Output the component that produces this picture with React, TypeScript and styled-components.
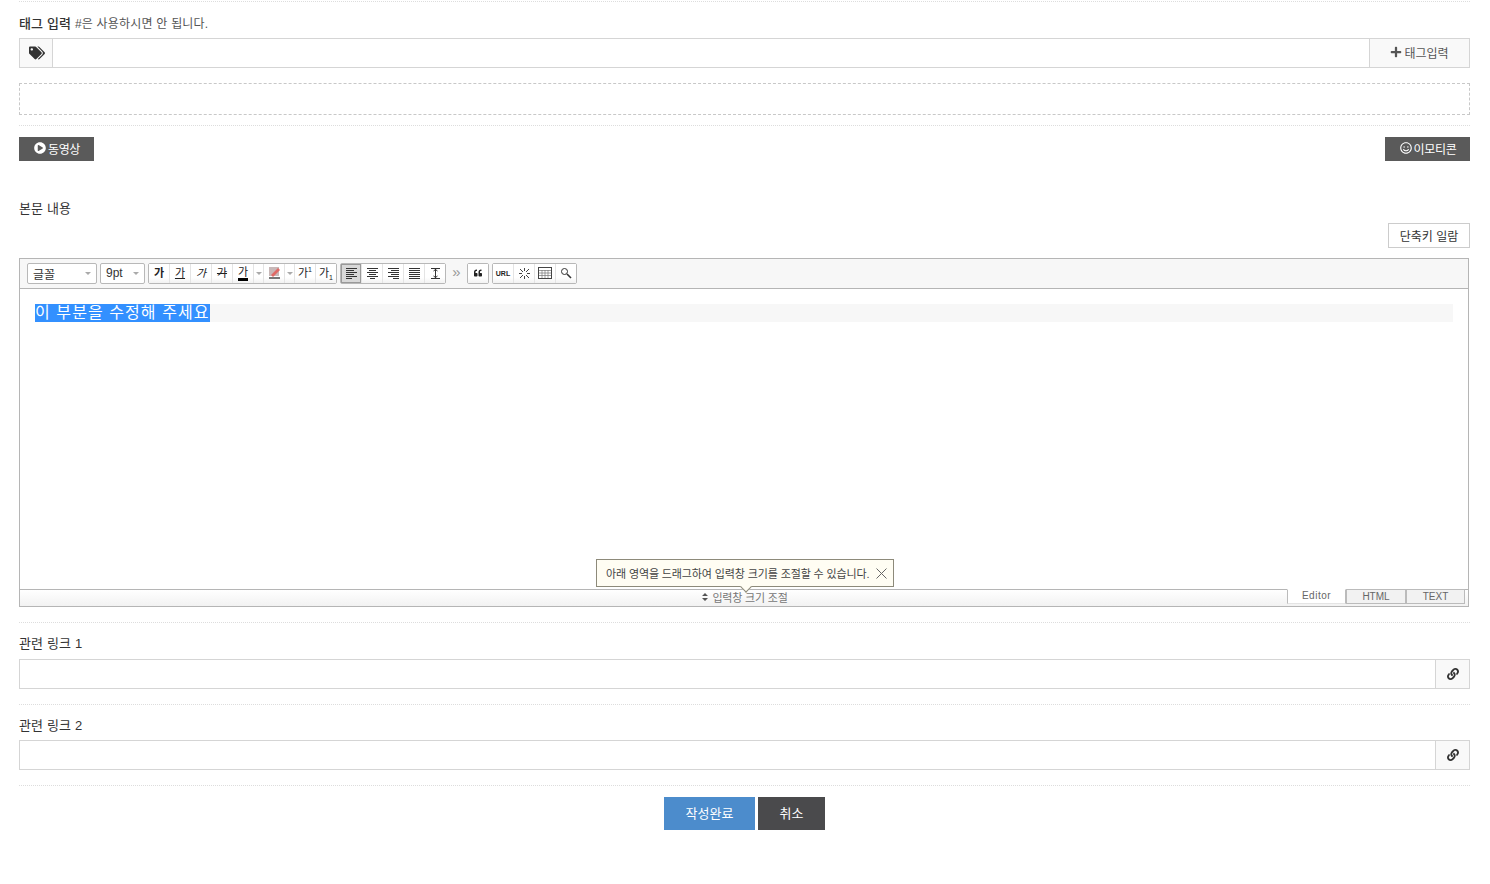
import React from 'react';
import styled, { createGlobalStyle } from 'styled-components';
import { FaTags, FaPlus, FaPlayCircle, FaRegSmile, FaLink, FaQuoteLeft } from 'react-icons/fa';

const FONT = `"Liberation Sans", "Noto Sans CJK KR", sans-serif`;

const GlobalStyle = createGlobalStyle`
	html, body {
		margin: 0;
		padding: 0;
		background: #fff;
		font-family: ${FONT};
		font-size: 12px;
		color: #333;
	}
	* {
		box-sizing: border-box;
	}
`;

const Page = styled.div`
	width: 1490px;
	height: 884px;
	padding: 1px 20px 0 19px;
	overflow: hidden;
`;

const Dotted = styled.div<{ $top?: number }>`
	height: 1px;
	border-top: 1px dotted #ddd;
	margin-top: ${(p) => p.$top ?? 0}px;
`;

const Label = styled.div<{ $top: number }>`
	margin-top: ${(p) => p.$top}px;
	height: 16px;
	line-height: 16px;
	font-size: 13px;
	color: #333;
	letter-spacing: 0.15px;

	& b {
		font-weight: 500;
	}

	& small {
		font-size: 12px;
		letter-spacing: 0.2px;
		color: #555;
	}
`;

const InputRow = styled.div<{ $top: number }>`
	display: flex;
	height: 30px;
	margin-top: ${(p) => p.$top}px;
	border: 1px solid #d5d5d5;
`;

const Addon = styled.div<{ $width: number; $side: 'left' | 'right' }>`
	flex: none;
	width: ${(p) => p.$width}px;
	display: flex;
	align-items: center;
	justify-content: center;
	background: #f9f9f9;
	color: #555;
	font-size: 12px;
	border-${(p) => (p.$side === 'left' ? 'right' : 'left')}: 1px solid #d5d5d5;
`;

const TagAddon = styled(Addon)`
	padding-bottom: 2px;
	gap: 2px;
`;

const TagIconAddon = styled(Addon)`
	padding-left: 1px;
`;

const Field = styled.div`
	flex: 1;
	background: #fff;
`;

const TagList = styled.div`
	height: 32px;
	margin-top: 15px;
	border: 1px dashed #c8c8c8;
`;

const MediaRow = styled.div`
	display: flex;
	justify-content: space-between;
	margin-top: 11px;
`;

const MediaButton = styled.div<{ $width: number }>`
	width: ${(p) => p.$width}px;
	height: 24px;
	display: flex;
	align-items: center;
	justify-content: center;
	gap: 2px;
	padding: 0 0 2px 1px;
	background: #5a5a5a;
	color: #fff;
	font-size: 12px;
	letter-spacing: -0.35px;
`;

const ShortcutRow = styled.div`
	display: flex;
	justify-content: flex-end;
	margin-top: 6px;
`;

const ShortcutButton = styled.div`
	width: 82px;
	height: 25px;
	display: flex;
	align-items: center;
	justify-content: center;
	border: 1px solid #ccc;
	background: #fff;
	font-size: 12px;
	color: #333;
`;

const Editor = styled.div`
	position: relative;
	width: 1450px;
	height: 349px;
	margin-top: 10px;
	border: 1px solid #b5b5b5;
	display: flex;
	flex-direction: column;
`;

const Toolbar = styled.div`
	height: 30px;
	flex: none;
	display: flex;
	align-items: center;
	gap: 3px;
	padding: 0 0 1px 7px;
	background: #f7f7f7;
	border-bottom: 1px solid #b5b5b5;
`;

const Combo = styled.div<{ $width: number }>`
	width: ${(p) => p.$width}px;
	height: 21px;
	display: flex;
	align-items: center;
	justify-content: space-between;
	padding: 0 5px;
	background: #fff;
	border: 1px solid #b8b8b8;
	border-radius: 2px;
	font-size: 12px;
	color: #333;
`;

const Caret = styled.i`
	display: block;
	width: 0;
	height: 0;
	border-left: 3px solid transparent;
	border-right: 3px solid transparent;
	border-top: 3px solid #aaa;
`;

const Group = styled.div`
	display: flex;
	height: 21px;
	background: #fff;
	border: 1px solid #b8b8b8;
	border-radius: 2px;

	& > :first-child {
		width: 20px;
	}
`;

const Tool = styled.div<{ $active?: boolean; $narrow?: boolean }>`
	width: ${(p) => (p.$narrow ? 10 : 21)}px;
	height: 19px;
	display: flex;
	align-items: center;
	justify-content: center;
	font-size: 11px;
	line-height: 1;
	color: #222;
	background: ${(p) => (p.$active ? '#d8d8d8' : 'linear-gradient(#fff 70%, #f2f2f2)')};
	box-shadow: ${(p) => (p.$active ? 'inset 0 0 0 1px #999' : 'none')};

	& + & {
		border-left: 1px solid #e4e4e4;
	}
`;

const More = styled.div`
	width: 15px;
	padding-bottom: 3px;
	text-align: center;
	font-size: 15px;
	line-height: 16px;
	color: #999;
`;

const Glyph = styled.span<{ $bold?: boolean; $line?: 'under' | 'strike'; $italic?: boolean }>`
	font-weight: ${(p) => (p.$bold ? 700 : 400)};
	font-style: ${(p) => (p.$italic ? 'italic' : 'normal')};
	text-decoration: ${(p) => (p.$line === 'strike' ? 'line-through' : p.$line ? 'underline' : 'none')};

	& sup,
	& sub {
		font-size: 7px;
		line-height: 0;
	}
`;

const ColorGlyph = styled.span`
	display: block;
	height: 15px;
	line-height: 12px;
	border-bottom: 3px solid #000;
`;

const TinyGlyph = styled.span`
	font-size: 7px;
	font-weight: 700;
`;

const Body = styled.div`
	flex: 1;
	padding: 15px 15px 0;
	background: #fff;
`;

const BodyLine = styled.div`
	height: 18px;
	line-height: 18px;
	background: #f7f7f7;
	font-size: 16px;
	color: #fff;
`;

const Selected = styled.span`
	display: inline-block;
	height: 18px;
	letter-spacing: 1.08px;
	background: #3390ff;
`;

const ResizeBar = styled.div`
	position: relative;
	flex: none;
	height: 17px;
	display: flex;
	align-items: center;
	justify-content: center;
	gap: 4px;
	padding: 0 0 2px 2px;
	background: linear-gradient(#fff, #f2f2f2);
	border-top: 1px solid #b5b5b5;
	color: #777;
	font-size: 11px;
	letter-spacing: -0.2px;
`;

const Tabs = styled.div`
	position: absolute;
	right: 3px;
	top: -1px;
	display: flex;
	height: 15px;
`;

const Tab = styled.div<{ $active?: boolean; $width: number }>`
	width: ${(p) => p.$width}px;
	height: 15px;
	display: flex;
	align-items: center;
	justify-content: center;
	padding-bottom: ${(p) => (p.$active ? 3 : 0)}px;
	font-size: 10px;
	color: #666;
	background: ${(p) => (p.$active ? '#fff' : '#f2f2f2')};
	border: 1px solid #bbb;
	border-top-color: ${(p) => (p.$active ? '#fff' : '#bbb')};
	border-bottom-color: ${(p) => (p.$active ? '#e4e4e4' : '#bbb')};
	letter-spacing: ${(p) => (p.$active ? '0.5px' : '0')};
`;

const Hint = styled.div`
	position: absolute;
	left: 576px;
	top: 300px;
	width: 298px;
	height: 28px;
	display: flex;
	align-items: center;
	justify-content: space-between;
	padding: 0 6px 0 9px;
	background: #fffdf3;
	border: 1px solid #8d8a7a;
	font-size: 11px;
	letter-spacing: -0.12px;
	color: #444;
	white-space: nowrap;

	&::after {
		content: '';
		position: absolute;
		left: 145px;
		bottom: -5px;
		width: 7px;
		height: 7px;
		background: #fffdf3;
		border-right: 1px solid #8d8a7a;
		border-bottom: 1px solid #8d8a7a;
		transform: rotate(45deg);
	}
`;

const Actions = styled.div`
	display: flex;
	justify-content: center;
	gap: 3px;
	margin-top: 11px;
`;

const ActionButton = styled.div<{ $primary?: boolean; $width: number }>`
	width: ${(p) => p.$width}px;
	height: 33px;
	display: flex;
	align-items: center;
	justify-content: center;
	padding-bottom: 2px;
	background: ${(p) => (p.$primary ? '#4c8ccc' : '#4a4a4c')};
	color: #fff;
	font-size: 13px;
`;

const AlignIcon = ({ rows }: { rows: [number, number][] }) => (
	<svg width="13" height="13" viewBox="0 0 13 13">
		{rows.map(([x, w], i) => (
			<rect key={i} x={x} y={1 + i * 2} width={w} height="1" fill="#333" />
		))}
	</svg>
);

const App = () => (
	<>
		<GlobalStyle />
		<Page>
			<Dotted />
			<Label $top={14}>
				<b>태그 입력</b> <small>#은 사용하시면 안 됩니다.</small>
			</Label>
			<InputRow $top={6}>
				<TagIconAddon $width={33} $side="left">
					<FaTags size={16} color="#333" />
				</TagIconAddon>
				<Field />
				<TagAddon $width={100} $side="right">
					<FaPlus size={12} />
					태그입력
				</TagAddon>
			</InputRow>
			<TagList />
			<Dotted $top={10} />
			<MediaRow>
				<MediaButton $width={75}>
					<FaPlayCircle size={12} />
					동영상
				</MediaButton>
				<MediaButton $width={85}>
					<FaRegSmile size={12} />
					이모티콘
				</MediaButton>
			</MediaRow>
			<Label $top={40}>본문 내용</Label>
			<ShortcutRow>
				<ShortcutButton>단축키 일람</ShortcutButton>
			</ShortcutRow>
			<Editor>
				<Toolbar>
					<Combo $width={70}>
						글꼴
						<Caret />
					</Combo>
					<Combo $width={45}>
						9pt
						<Caret />
					</Combo>
					<Group>
						<Tool><Glyph $bold>가</Glyph></Tool>
						<Tool><Glyph $line="under">가</Glyph></Tool>
						<Tool><Glyph $italic>가</Glyph></Tool>
						<Tool><Glyph $line="strike">가</Glyph></Tool>
						<Tool><ColorGlyph>가</ColorGlyph></Tool>
						<Tool $narrow><Caret /></Tool>
						<Tool>
							<svg width="13" height="14" viewBox="0 0 13 14">
								<rect x="1" y="1" width="10" height="9" fill="#c8b8b8" />
								<path d="M3 9 L10 2 L12 4 L5 11 Z" fill="#e06a66" />
								<rect x="1" y="11" width="11" height="2" fill="#777" />
							</svg>
						</Tool>
						<Tool $narrow><Caret /></Tool>
						<Tool><Glyph>가<sup>1</sup></Glyph></Tool>
						<Tool><Glyph>가<sub>1</sub></Glyph></Tool>
					</Group>
					<Group>
						<Tool $active><AlignIcon rows={[[1, 11], [1, 8], [1, 11], [1, 8], [1, 11], [1, 6]]} /></Tool>
						<Tool><AlignIcon rows={[[1, 11], [3, 7], [1, 11], [3, 7], [1, 11], [4, 5]]} /></Tool>
						<Tool><AlignIcon rows={[[1, 11], [4, 8], [1, 11], [4, 8], [1, 11], [6, 6]]} /></Tool>
						<Tool><AlignIcon rows={[[1, 11], [1, 11], [1, 11], [1, 11], [1, 11], [1, 11]]} /></Tool>
						<Tool>
							<svg width="13" height="13" viewBox="0 0 13 13" fill="none" stroke="#333">
								<path d="M2 1.5H11M2 11.5H11M6.5 2V11M4.5 4L6.5 2.5L8.5 4M4.5 9L6.5 10.5L8.5 9" />
							</svg>
						</Tool>
					</Group>
					<More>»</More>
					<Group>
						<Tool><FaQuoteLeft size={8} /></Tool>
					</Group>
					<Group>
						<Tool><TinyGlyph>URL</TinyGlyph></Tool>
						<Tool>
							<svg width="13" height="13" viewBox="0 0 13 13" stroke="#444" fill="none">
								<path d="M2 2L5 5M11 2L8 5M2 11L5 8M11 11L8 8M6.5 1V4M6.5 9V12M1 6.5H4M9 6.5H12" />
							</svg>
						</Tool>
						<Tool>
							<svg width="14" height="12" viewBox="0 0 14 12" fill="none" stroke="#777">
								<rect x="0.5" y="0.5" width="13" height="11" fill="#fff" stroke="#444" />
								<path d="M1 3.5H13M1 6H13M1 8.5H13M4 3V11M7 3V11M10 3V11" strokeWidth="0.7" />
							</svg>
						</Tool>
						<Tool>
							<svg width="12" height="12" viewBox="0 0 12 12" fill="none" stroke="#333">
								<circle cx="4.5" cy="4.5" r="3" />
								<path d="M7 7L11 11" strokeWidth="1.6" />
							</svg>
						</Tool>
					</Group>
				</Toolbar>
				<Body>
					<BodyLine>
						<Selected>이 부분을 수정해 주세요</Selected>
					</BodyLine>
				</Body>
				<ResizeBar>
					<svg width="6" height="8" viewBox="0 0 6 8">
						<path d="M3 0L6 3H0ZM3 8L0 5H6Z" fill="#555" />
					</svg>
					입력창 크기 조절
					<Tabs>
						<Tab $active $width={59}>Editor</Tab>
						<Tab $width={60}>HTML</Tab>
						<Tab $width={59}>TEXT</Tab>
					</Tabs>
				</ResizeBar>
				<Hint>
					아래 영역을 드래그하여 입력창 크기를 조절할 수 있습니다.
					<svg width="11" height="11" viewBox="0 0 11 11" stroke="#666" fill="none">
						<path d="M0.5 0.5L10.5 10.5M10.5 0.5L0.5 10.5" />
					</svg>
				</Hint>
			</Editor>
			<Dotted $top={15} />
			<Label $top={13}>관련 링크 1</Label>
			<InputRow $top={7}>
				<Field />
				<Addon $width={34} $side="right">
					<FaLink size={12} color="#333" />
				</Addon>
			</InputRow>
			<Dotted $top={15} />
			<Label $top={13}>관련 링크 2</Label>
			<InputRow $top={6}>
				<Field />
				<Addon $width={34} $side="right">
					<FaLink size={12} color="#333" />
				</Addon>
			</InputRow>
			<Dotted $top={15} />
			<Actions>
				<ActionButton $primary $width={91}>작성완료</ActionButton>
				<ActionButton $width={67}>취소</ActionButton>
			</Actions>
		</Page>
	</>
);

export default App;
